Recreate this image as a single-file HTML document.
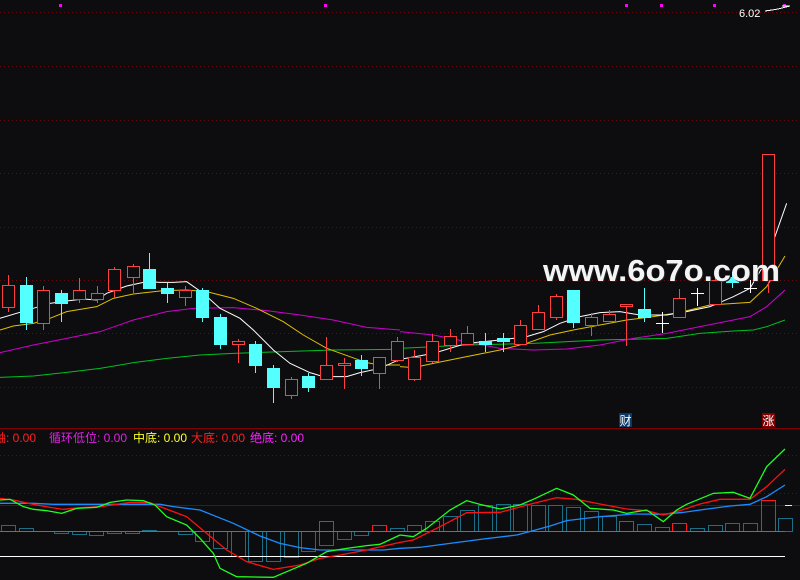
<!DOCTYPE html>
<html><head><meta charset="utf-8"><style>
html,body{margin:0;padding:0;background:#0d0d10;width:800px;height:580px;overflow:hidden}
svg{display:block}
</style></head><body>
<svg width="800" height="580" viewBox="0 0 800 580" xmlns="http://www.w3.org/2000/svg" shape-rendering="crispEdges">
<rect width="800" height="580" fill="#0d0d10"/>
<g stroke="#6a0a0a" stroke-width="1" stroke-dasharray="1,3">
<line x1="0" y1="12.5" x2="800" y2="12.5"/><line x1="0" y1="66.5" x2="800" y2="66.5"/>
<line x1="0" y1="120.5" x2="800" y2="120.5"/><line x1="0" y1="173.5" x2="800" y2="173.5"/>
<line x1="0" y1="227.5" x2="800" y2="227.5"/><line x1="0" y1="280.5" x2="800" y2="280.5"/>
<line x1="0" y1="333.5" x2="800" y2="333.5"/><line x1="0" y1="387.5" x2="800" y2="387.5"/>
<line x1="0" y1="455.5" x2="800" y2="455.5"/><line x1="0" y1="493.5" x2="800" y2="493.5"/>
</g>
<line x1="0" y1="428.5" x2="800" y2="428.5" stroke="#800000"/>
<g fill="#ff00ff"><rect x="59" y="4" width="3" height="3"/><rect x="324" y="4" width="3" height="3"/><rect x="625" y="4" width="3" height="3"/><rect x="660" y="4" width="3" height="3"/><rect x="713" y="4" width="3" height="3"/><rect x="783" y="4" width="3" height="3"/></g>
<text x="739" y="17" fill="#fff" font-family="Liberation Sans, sans-serif" font-size="11">6.02</text>
<polyline points="765,11 772,10 778,9 790,6" stroke="#fff" fill="none"/><line x1="782" y1="6" x2="790" y2="6" stroke="#fff"/>

<!-- MA lines -->
<g fill="none" stroke-width="1" shape-rendering="auto">
<g transform="translate(0,240) scale(0.33333)">
<polyline vector-effect="non-scaling-stroke" stroke="#00c020" points="0,412 100,408 200,397 300,385 400,368 500,355 600,345 700,340 850,335 1000,330 1200,328"/>
<polyline vector-effect="non-scaling-stroke" stroke="#d000d0" points="0,338 100,315 200,295 300,275 400,240 500,215 580,205 700,203 800,212 900,225 1000,240 1100,262 1200,270"/>
<polyline vector-effect="non-scaling-stroke" stroke="#e0c000" points="0,270 40,258 100,250 150,235 200,215 290,200 340,175 400,162 490,152 560,150 620,155 700,175 770,205 850,245 910,285 980,325 1050,350 1100,368 1140,375 1200,375"/>
<polyline vector-effect="non-scaling-stroke" stroke="#ffffff" points="0,235 100,205 150,190 200,183 250,177 290,180 320,160 380,138 440,125 480,127 520,127 560,125 610,160 660,205 720,235 760,270 820,330 870,370 930,398 970,410 1040,410 1080,398 1140,385 1200,358"/>
</g>
<g transform="translate(400,140) scale(0.33333)">
<polyline vector-effect="non-scaling-stroke" stroke="#00c020" points="0,625 200,615 400,610 600,600 800,595 900,580 1000,573 1060,570 1100,560 1155,540"/>
<polyline vector-effect="non-scaling-stroke" stroke="#d000d0" points="0,575 100,585 200,605 300,625 400,630 500,627 600,615 700,595 800,580 900,560 1000,540 1050,530 1100,500 1155,450"/>
<polyline vector-effect="non-scaling-stroke" stroke="#e0c000" points="0,680 40,683 100,670 200,650 300,630 380,610 450,585 520,570 600,555 680,540 760,530 840,517 930,495 1050,487 1100,440 1155,348"/>
<polyline vector-effect="non-scaling-stroke" stroke="#ffffff" points="0,658 100,640 200,610 300,600 380,590 430,575 480,550 540,530 600,518 660,515 720,525 800,525 860,515 930,500 1000,470 1050,445 1100,360 1160,190"/>
</g>
</g>

<!-- candles -->
<g stroke="#ff4040" fill="#0d0d10">
<line x1="8.5" y1="275" x2="8.5" y2="312"/><rect x="2.5" y="285.5" width="12" height="22"/>
<line x1="43.5" y1="286" x2="43.5" y2="330"/><rect x="37.5" y="290.5" width="12" height="33"/>
<line x1="79.5" y1="278" x2="79.5" y2="303"/><rect x="73.5" y="290.5" width="12" height="9"/>
<line x1="97.5" y1="286" x2="97.5" y2="303"/><rect x="91.5" y="293.5" width="12" height="6"/>
<line x1="114.5" y1="267" x2="114.5" y2="298"/><rect x="108.5" y="269.5" width="12" height="21"/>
<line x1="133.5" y1="264" x2="133.5" y2="293"/><rect x="127.5" y="266.5" width="12" height="11"/>
<line x1="185.5" y1="286" x2="185.5" y2="306"/><rect x="179.5" y="290.5" width="12" height="7"/>
<line x1="238.5" y1="339" x2="238.5" y2="363"/><rect x="232.5" y="341.5" width="12" height="3"/>
<line x1="291.5" y1="377" x2="291.5" y2="399"/><rect x="285.5" y="379.5" width="12" height="16"/>
<line x1="326.5" y1="337" x2="326.5" y2="379"/><rect x="320.5" y="365.5" width="12" height="14"/>
<line x1="344.5" y1="358" x2="344.5" y2="389"/><rect x="338.5" y="363.5" width="12" height="2"/>
<line x1="379.5" y1="357" x2="379.5" y2="389"/><rect x="373.5" y="357.5" width="12" height="16"/>
<line x1="397.5" y1="337" x2="397.5" y2="362"/><rect x="391.5" y="341.5" width="12" height="19"/>
<line x1="414.5" y1="350" x2="414.5" y2="381"/><rect x="408.5" y="357.5" width="12" height="22"/>
<line x1="432.5" y1="334" x2="432.5" y2="363"/><rect x="426.5" y="341.5" width="12" height="20"/>
<line x1="450.5" y1="329" x2="450.5" y2="352"/><rect x="444.5" y="336.5" width="12" height="9"/>
<line x1="467.5" y1="326" x2="467.5" y2="344"/><rect x="461.5" y="333.5" width="12" height="11"/>
<line x1="520.5" y1="320" x2="520.5" y2="344"/><rect x="514.5" y="325.5" width="12" height="19"/>
<line x1="538.5" y1="305" x2="538.5" y2="330"/><rect x="532.5" y="312.5" width="12" height="17"/>
<line x1="556.5" y1="294" x2="556.5" y2="320"/><rect x="550.5" y="296.5" width="12" height="21"/>
<line x1="591.5" y1="313" x2="591.5" y2="336"/><rect x="585.5" y="317.5" width="12" height="8"/>
<line x1="609.5" y1="310" x2="609.5" y2="322"/><rect x="603.5" y="314.5" width="12" height="7"/>
<line x1="626.5" y1="304" x2="626.5" y2="346"/><rect x="620.5" y="304.5" width="12" height="2"/>
<line x1="679.5" y1="289" x2="679.5" y2="317"/><rect x="673.5" y="298.5" width="12" height="19"/>
<line x1="715.5" y1="273" x2="715.5" y2="304"/><rect x="709.5" y="280.5" width="12" height="24"/>
<line x1="768.5" y1="280" x2="768.5" y2="293"/><rect x="762.5" y="154.5" width="12" height="126"/>
</g>
<g stroke="#54ffff" fill="#54ffff">
<line x1="26.5" y1="277" x2="26.5" y2="330"/><rect x="20.5" y="285.5" width="12" height="37"/>
<line x1="61.5" y1="290" x2="61.5" y2="322"/><rect x="55.5" y="293.5" width="12" height="10"/>
<line x1="149.5" y1="253" x2="149.5" y2="289"/><rect x="143.5" y="269.5" width="12" height="19"/>
<line x1="167.5" y1="283" x2="167.5" y2="303"/><rect x="161.5" y="288.5" width="12" height="5"/>
<line x1="202.5" y1="288" x2="202.5" y2="322"/><rect x="196.5" y="290.5" width="12" height="27"/>
<line x1="220.5" y1="314" x2="220.5" y2="349"/><rect x="214.5" y="317.5" width="12" height="27"/>
<line x1="255.5" y1="341" x2="255.5" y2="373"/><rect x="249.5" y="344.5" width="12" height="21"/>
<line x1="273.5" y1="365" x2="273.5" y2="403"/><rect x="267.5" y="368.5" width="12" height="19"/>
<line x1="308.5" y1="373" x2="308.5" y2="392"/><rect x="302.5" y="376.5" width="12" height="11"/>
<line x1="361.5" y1="355" x2="361.5" y2="376"/><rect x="355.5" y="360.5" width="12" height="8"/>
<line x1="485.5" y1="333" x2="485.5" y2="352"/><rect x="479.5" y="341.5" width="12" height="3"/>
<line x1="503.5" y1="333" x2="503.5" y2="352"/><rect x="497.5" y="338.5" width="12" height="3"/>
<line x1="573.5" y1="290" x2="573.5" y2="328"/><rect x="567.5" y="290.5" width="12" height="32"/>
<line x1="644.5" y1="288" x2="644.5" y2="322"/><rect x="638.5" y="309.5" width="12" height="8"/>
<line x1="732.5" y1="272" x2="732.5" y2="288"/><rect x="726.5" y="277.5" width="12" height="5"/>
</g>
<g stroke="#ffffff">
<line x1="662.5" y1="312" x2="662.5" y2="333"/><line x1="656" y1="323.5" x2="669" y2="323.5"/>
<line x1="697.5" y1="288" x2="697.5" y2="306"/><line x1="691" y1="293.5" x2="704" y2="293.5"/>
<line x1="750.5" y1="280" x2="750.5" y2="293"/><line x1="744" y1="288.5" x2="757" y2="288.5"/>
</g>

<text x="543" y="281" textLength="237" lengthAdjust="spacingAndGlyphs" fill="#222" font-family="Liberation Sans, sans-serif" font-weight="bold" font-size="31" transform="translate(1,1)">www.6o7o.com</text>
<text x="543" y="281" textLength="237" lengthAdjust="spacingAndGlyphs" fill="#f4f4f4" font-family="Liberation Sans, sans-serif" font-weight="bold" font-size="31">www.6o7o.com</text>

<rect x="619" y="413" width="13" height="14" fill="#0a3a6a"/>
<text x="619.5" y="425" fill="#fff" font-family="Liberation Sans, 'Noto Sans CJK SC', sans-serif" font-size="12">财</text>
<rect x="762" y="413" width="13" height="14" fill="#800000"/>
<text x="762.5" y="425" fill="#fff" font-family="Liberation Sans, 'Noto Sans CJK SC', sans-serif" font-size="12">涨</text>

<g font-family="Liberation Sans, 'Noto Sans CJK SC', sans-serif" font-size="12">
<text x="-6" y="442" fill="#ff2020">轴: 0.00</text>
<text x="49" y="442" fill="#e020e0">循环低位: 0.00</text>
<text x="133" y="442" fill="#ffff20">中底: 0.00</text>
<text x="191" y="442" fill="#ff2020">大底: 0.00</text>
<text x="250" y="442" fill="#ff20ff">绝底: 0.00</text>
</g>

<!-- indicator panel -->
<line x1="0" y1="505.5" x2="800" y2="505.5" stroke="#1010d0"/>
<line x1="785" y1="505.5" x2="792" y2="505.5" stroke="#ffff40"/>
<g fill="none" stroke="#1a6e85" stroke-width="1">
<rect x="1.5" y="525.5" width="14" height="6"/><rect x="19.5" y="528.5" width="14" height="3"/>
<rect x="54.5" y="531.5" width="14" height="2"/><rect x="72.5" y="531.5" width="14" height="3"/><rect x="89.5" y="531.5" width="14" height="4"/><rect x="107.5" y="531.5" width="14" height="2"/><rect x="125.5" y="531.5" width="14" height="2"/>
<rect x="142.5" y="530.5" width="14" height="1"/><rect x="178.5" y="531.5" width="14" height="3"/><rect x="195.5" y="531.5" width="14" height="10"/><rect x="213.5" y="531.5" width="14" height="17"/><rect x="231.5" y="531.5" width="14" height="25"/><rect x="248.5" y="531.5" width="14" height="30"/><rect x="266.5" y="531.5" width="14" height="30"/><rect x="284.5" y="531.5" width="14" height="26"/><rect x="301.5" y="531.5" width="14" height="20"/><rect x="319.5" y="531.5" width="14" height="14"/><rect x="337.5" y="531.5" width="14" height="8"/><rect x="354.5" y="531.5" width="14" height="4"/>
<rect x="390.5" y="528.5" width="14" height="3"/><rect x="407.5" y="525.5" width="14" height="6"/><rect x="425.5" y="521.5" width="14" height="10"/><rect x="443.5" y="516.5" width="14" height="15"/><rect x="460.5" y="510.5" width="14" height="21"/><rect x="478.5" y="505.5" width="14" height="26"/><rect x="496.5" y="504.5" width="14" height="27"/><rect x="513.5" y="504.5" width="14" height="27"/><rect x="531.5" y="505.5" width="14" height="26"/><rect x="548.5" y="505.5" width="14" height="26"/><rect x="566.5" y="507.5" width="14" height="24"/><rect x="584.5" y="511.5" width="14" height="20"/><rect x="602.5" y="516.5" width="14" height="15"/><rect x="637.5" y="524.5" width="14" height="7"/><rect x="655.5" y="527.5" width="14" height="4"/><rect x="690.5" y="528.5" width="14" height="3"/><rect x="708.5" y="525.5" width="14" height="6"/><rect x="725.5" y="523.5" width="14" height="8"/><rect x="743.5" y="523.5" width="14" height="8"/><rect x="778.5" y="518.5" width="14" height="13"/>
</g>
<g fill="none" stroke="#ff1818">
<rect x="319.5" y="521.5" width="14" height="10"/><rect x="372.5" y="525.5" width="14" height="6"/><rect x="619.5" y="521.5" width="14" height="10"/><rect x="672.5" y="523.5" width="14" height="8"/><rect x="761.5" y="500.5" width="14" height="31"/>
</g>
<line x1="0" y1="531.5" x2="785" y2="531.5" stroke="#e020e0"/>
<line x1="0" y1="556.5" x2="785" y2="556.5" stroke="#ffffff"/>
<g fill="none" shape-rendering="auto">
<g transform="translate(0,450) scale(0.33333)">
<polyline vector-effect="non-scaling-stroke" stroke="#1a8cff" stroke-width="1.3" points="0,160 100,160 160,163 260,163 480,163 520,170 600,180 700,220 780,258 840,280 900,293 960,300 1150,300 1200,295"/>
<polyline vector-effect="non-scaling-stroke" stroke="#ff1010" stroke-width="1.3" points="0,145 40,150 100,163 150,172 190,178 240,173 300,170 390,157 450,158 475,168 520,185 560,200 620,250 680,300 740,335 820,358 900,345 960,325 1020,315 1100,300 1200,277"/>
<polyline vector-effect="non-scaling-stroke" stroke="#20ff20" stroke-width="1.3" points="0,150 30,148 70,170 100,178 140,182 185,190 230,175 290,172 330,157 380,150 430,152 465,165 500,200 560,225 600,265 640,310 660,355 710,380 820,382 860,365 920,340 980,305 1040,295 1100,287 1140,283 1200,255"/>
</g>
<g transform="translate(400,450) scale(0.33333)">
<polyline vector-effect="non-scaling-stroke" stroke="#1a8cff" stroke-width="1.3" points="0,295 60,292 150,280 250,267 350,255 400,242 450,228 500,212 600,200 700,192 790,193 850,187 900,180 990,168 1050,163 1100,140 1155,105"/>
<polyline vector-effect="non-scaling-stroke" stroke="#ff1010" stroke-width="1.3" points="0,277 40,270 120,230 200,188 300,187 400,160 470,143 530,148 600,162 680,177 740,182 790,195 840,182 900,162 960,148 1050,148 1100,110 1155,58"/>
<polyline vector-effect="non-scaling-stroke" stroke="#20ff20" stroke-width="1.3" points="0,255 40,260 80,235 150,180 200,152 240,163 300,177 360,165 400,148 470,115 520,135 570,175 640,180 680,190 740,180 790,215 830,180 860,163 940,130 1000,127 1050,145 1100,50 1155,-3"/>
</g>
</g>
</svg>
</body></html>
